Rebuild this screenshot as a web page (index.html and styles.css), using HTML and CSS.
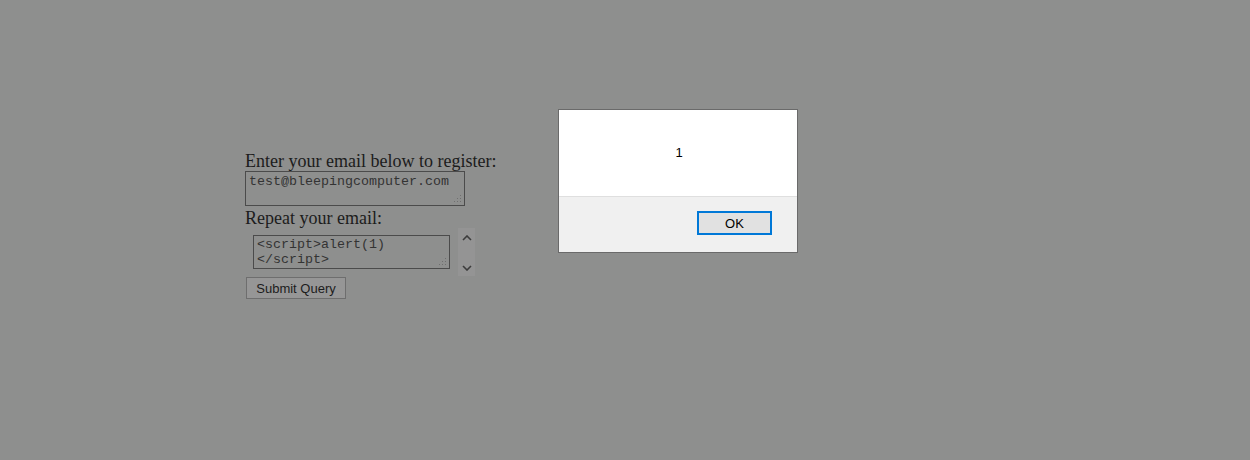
FILE: index.html
```html
<!DOCTYPE html>
<html lang="en">
<head>
  <meta charset="UTF-8" />
  <title>Register</title>
  <link rel="stylesheet" href="styles.css">
</head>
<body>

  <!-- Register form (dimmed behind alert) -->
  <form class="register">
    <label class="field-label">Enter your email below to register:</label>
    <div class="box email-box">test@bleepingcomputer.com<span class="grip"></span></div>
    <label class="field-label">Repeat your email:</label>
    <div class="repeat-row">
      <div class="box repeat-box">&lt;script&gt;alert(1)<br>&lt;/script&gt;<span class="grip"></span></div>
      <div class="spinner">
        <svg width="10" height="6" viewBox="0 0 10 6"><path d="M1 5 L5 1 L9 5" fill="none" stroke="#3c3c3c" stroke-width="1.6"/></svg>
        <svg width="10" height="6" viewBox="0 0 10 6"><path d="M1 1 L5 5 L9 1" fill="none" stroke="#3c3c3c" stroke-width="1.6"/></svg>
      </div>
    </div>
    <div class="submit">Submit Query</div>
  </form>

  <!-- Alert dialog -->
  <div class="alert">
    <div class="alert-body">1</div>
    <div class="alert-foot">
      <button class="ok">OK</button>
    </div>
  </div>

</body>
</html>
```

FILE: styles.css
```css
* { margin: 0; padding: 0; box-sizing: border-box; }

html, body {
  width: 100%;
  height: 100%;
  overflow: hidden;
  background: #8e8f8e;
  position: relative;
}

.register {
  display: flex;
  flex-direction: column;
  align-items: flex-start;
  padding: 151px 0 0 245px;
  font-family: "Liberation Serif", serif;
  font-size: 18px;
  color: #1c1c1c;
}

.field-label { line-height: 20px; }

.box {
  position: relative;
  font-family: "Liberation Mono", monospace;
  font-size: 13.33px;
  line-height: 15px;
  color: #333;
  border: 1px solid #4b4b4b;
  padding: 2px 3px;
}

.email-box {
  width: 220px;
  height: 35px;
  margin-bottom: 2px;
}

.repeat-row {
  display: flex;
  align-items: flex-start;
}

.repeat-box {
  width: 197px;
  height: 34px;
  margin: 7px 0 0 8px;
  padding-top: 1px;
}

.grip {
  position: absolute;
  right: 3px;
  bottom: 3px;
  width: 7px;
  height: 7px;
  background:
    linear-gradient(#6f6f6f, #6f6f6f) 6px 0 / 1px 1px no-repeat,
    linear-gradient(#6f6f6f, #6f6f6f) 3px 3px / 1px 1px no-repeat,
    linear-gradient(#6f6f6f, #6f6f6f) 6px 3px / 1px 1px no-repeat,
    linear-gradient(#6f6f6f, #6f6f6f) 0 6px / 1px 1px no-repeat,
    linear-gradient(#6f6f6f, #6f6f6f) 3px 6px / 1px 1px no-repeat,
    linear-gradient(#6f6f6f, #6f6f6f) 6px 6px / 1px 1px no-repeat;
}

.spinner {
  width: 17px;
  height: 48px;
  margin-left: 8px;
  background: #949494;
  display: flex;
  flex-direction: column;
  justify-content: space-between;
  align-items: center;
  padding: 7px 0 5px;
}

.submit {
  margin: 1px 0 0 1px;
  width: 100px;
  height: 22px;
  border: 1px solid #6e6e6e;
  background: #969696;
  font-family: "Liberation Sans", sans-serif;
  font-size: 13px;
  color: #1c1c1c;
  display: flex;
  align-items: center;
  justify-content: center;
}

/* alert sits over the page */
.alert {
  position: absolute;
  left: 558px;
  top: 109px;
  width: 240px;
  height: 144px;
  border: 1px solid #6a6a6a;
  background: #f0f0f0;
  display: flex;
  flex-direction: column;
  font-family: "Liberation Sans", sans-serif;
  font-size: 13px;
  color: #000;
}

.alert-body {
  background: #fff;
  height: 87px;
  border-bottom: 1px solid #dfdfdf;
  display: flex;
  align-items: center;
  justify-content: center;
  padding: 0 0 2px 2px;
}

.alert-foot {
  flex: 1;
  display: flex;
  justify-content: flex-end;
  align-items: flex-start;
  padding: 14px 25px 0 0;
}

.ok {
  width: 75px;
  height: 24px;
  border: 2px solid #0078d7;
  background: #e1e1e1;
  font-family: "Liberation Sans", sans-serif;
  font-size: 13px;
  color: #000;
}

button:focus { outline: none; }
```
